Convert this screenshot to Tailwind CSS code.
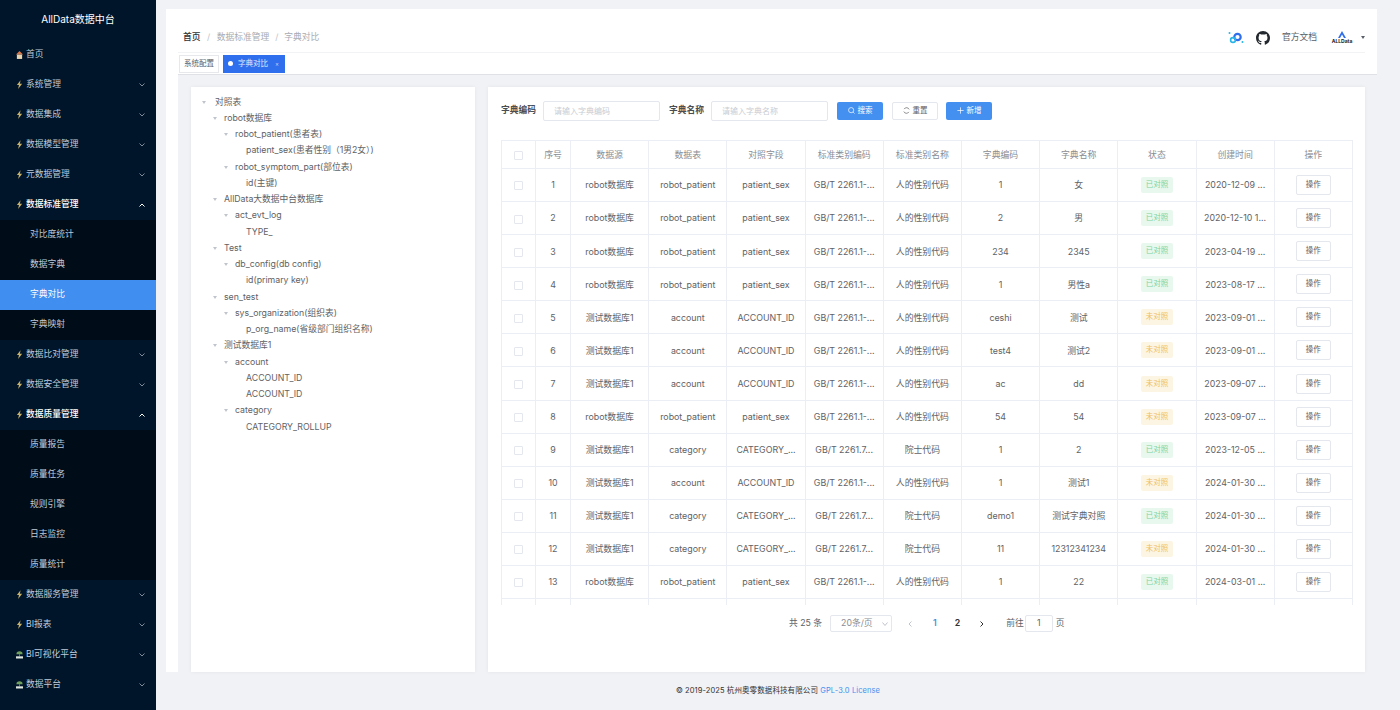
<!DOCTYPE html>
<html lang="zh">
<head>
  <meta charset="UTF-8" />
  <title>AllData数据中台</title>
  <script src="https://cdn.jsdelivr.net/npm/@tailwindcss/browser@4"></script>
</head>
<body class="bg-[#f0f2f5] font-['Inter','Noto_Sans_CJK_SC',sans-serif] overflow-hidden">
  <div class="flex w-[1400px] h-[710px] overflow-hidden">
    <!-- sidebar -->
    <aside id="sidebar" class="w-[156px] shrink-0 h-full bg-[#001529] text-[8.75px] text-[#bfcbd9] overflow-hidden">
      <div class="h-[39px] flex items-center justify-center text-[10px] text-white">AllData数据中台</div>
    </aside>

    <div class="flex-1 flex flex-col min-w-0">
      <div class="flex-1 min-h-0 pt-[9px] pl-[10px] pr-[23px]">
        <div class="h-full bg-white flex flex-col">
          <!-- navbar -->
          <header class="h-[44px] shrink-0 mx-[12px] pt-[14px] flex items-center border-b border-[#f2f3f5] text-[8.75px]">
            <div class="flex items-center pl-[5px] pt-[1px]">
              <span class="text-[#303133] font-medium">首页</span>
              <span class="mx-[6.5px] text-[#c0c4cc]">/</span>
              <span class="text-[#a8abb2]">数据标准管理</span>
              <span class="mx-[6px] text-[#c0c4cc]">/</span>
              <span class="text-[#a8abb2]">字典对比</span>
            </div>
            <div class="ml-auto flex items-center">
              <svg class="w-[16px] h-[14px]" viewBox="0 0 16 14">
                <circle cx="9.5" cy="6" r="3.2" fill="none" stroke="#2f6fed" stroke-width="2.2"/>
                <circle cx="5" cy="9" r="2.4" fill="none" stroke="#27b5e8" stroke-width="1.6"/>
                <circle cx="1.5" cy="2" r="1" fill="#27b5e8"/>
                <circle cx="14.5" cy="11" r="1" fill="#27b5e8"/>
              </svg>
              <svg class="w-[14px] h-[14px] ml-[12px] text-[#24292f]" viewBox="0 0 16 16" fill="currentColor">
                <path d="M8 0C3.58 0 0 3.58 0 8c0 3.54 2.29 6.53 5.47 7.59.4.07.55-.17.55-.38 0-.19-.01-.82-.01-1.49-2.01.37-2.53-.49-2.69-.94-.09-.23-.48-.94-.82-1.13-.28-.15-.68-.52-.01-.53.63-.01 1.08.58 1.23.82.72 1.21 1.87.87 2.33.66.07-.52.28-.87.51-1.07-1.78-.2-3.64-.89-3.64-3.95 0-.87.31-1.59.82-2.15-.08-.2-.36-1.02.08-2.12 0 0 .67-.21 2.2.82.64-.18 1.32-.27 2-.27s1.36.09 2 .27c1.53-1.04 2.2-.82 2.2-.82.44 1.1.16 1.92.08 2.12.51.56.82 1.27.82 2.15 0 3.07-1.87 3.75-3.65 3.95.29.25.54.73.54 1.48 0 1.07-.01 1.93-.01 2.2 0 .21.15.46.55.38A8.01 8.01 0 0 0 16 8c0-4.42-3.58-8-8-8z"/>
              </svg>
              <span class="ml-[12px] text-[#5a5e66]">官方文档</span>
              <div class="ml-[14px] flex flex-col items-center w-[22px]">
                <svg class="w-[8px] h-[7px]" viewBox="0 0 8 7"><path d="M4 0 8 7H6L4 3.5 2 7H0Z" fill="#2f6fed"/></svg>
                <span class="text-[5px] leading-[6px] font-bold text-[#1a1a1a] whitespace-nowrap">ALLData</span>
              </div>
              <span class="ml-[8px] w-0 h-0 border-x-[2.5px] border-x-transparent border-t-[3px] border-t-[#5a5e66]"></span>
            </div>
          </header>

          <!-- tags -->
          <div class="h-[21px] shrink-0 flex items-center pl-[13px] gap-[4px] text-[7.5px]">
            <span class="h-[18px] px-[4px] flex items-center border border-[#e6e8eb] text-[#5a5e66] bg-white">系统配置</span>
            <span class="h-[18px] px-[5px] flex items-center bg-[#2f6fed] text-white/85">
              <span class="w-[5px] h-[5px] rounded-full bg-white mr-[5px]"></span>字典对比<span class="ml-[7px] mr-[1px] text-[6px] text-white/70">×</span>
            </span>
          </div>

          <!-- content -->
          <main class="flex-1 min-h-0 bg-[#f0f2f5] ml-[12px] pl-[13px] pr-[12px] pt-[12px] flex gap-[13px] border-t border-[#dfe1e6]">
            <section id="tree" class="w-[284px] shrink-0 bg-white shadow-[0_0_4px_rgba(0,0,0,0.06)] pt-[7px] text-[8.75px] text-[#606266]"></section>

            <section class="flex-1 min-w-0 bg-white shadow-[0_0_4px_rgba(0,0,0,0.06)] pt-[13px] px-[13px]">
              <form class="flex items-center h-[21px] text-[8.75px]">
                <label class="font-semibold text-[#4a4d52]">字典编码</label>
                <input class="ml-[7px] w-[117px] h-[20px] px-[10px] border border-[#e4e7ed] rounded-[2px] text-[8px] placeholder:text-[#c8ccd3]" placeholder="请输入字典编码" />
                <label class="ml-[9px] font-semibold text-[#4a4d52]">字典名称</label>
                <input class="ml-[7px] w-[117px] h-[20px] px-[10px] border border-[#e4e7ed] rounded-[2px] text-[8px] placeholder:text-[#c8ccd3]" placeholder="请输入字典名称" />
                <button type="button" class="ml-[9px] w-[46px] h-[18px] rounded-[2px] bg-[#4390f0] text-white text-[7.5px] flex items-center justify-center gap-[3px]">
                  <svg class="w-[7px] h-[7px]" viewBox="0 0 10 10" fill="none" stroke="currentColor"><circle cx="4.5" cy="4.5" r="3.7"/><path d="M7.3 7.3 9.3 9.3"/></svg>搜索
                </button>
                <button type="button" class="ml-[9px] w-[46px] h-[18px] rounded-[2px] bg-white border border-[#e4e7ed] text-[#606266] text-[7.5px] flex items-center justify-center gap-[3px]">
                  <svg class="w-[7px] h-[7px]" viewBox="0 0 10 10" fill="none" stroke="currentColor"><path d="M8.8 3.5A4 4 0 0 0 1.6 3M1.2 6.5A4 4 0 0 0 8.4 7"/></svg>重置
                </button>
                <button type="button" class="ml-[8px] w-[46px] h-[18px] rounded-[2px] bg-[#4390f0] text-white text-[7.5px] flex items-center justify-center gap-[3px]">
                  <svg class="w-[7px] h-[7px]" viewBox="0 0 10 10" fill="none" stroke="currentColor"><path d="M5 .5v9M.5 5h9"/></svg>新增
                </button>
              </form>

              <div class="mt-[19px] mr-[-1px] h-[465px] overflow-hidden border-t border-[#ebeef5]">
                <table class="table-fixed w-[851px] border-collapse text-[8.85px] text-[#606266] text-center">
                  <colgroup>
                    <col class="w-[34px]" /><col class="w-[35px]" /><col class="w-[78.2px]" /><col class="w-[78.2px]" /><col class="w-[78.2px]" /><col class="w-[78.2px]" /><col class="w-[78.2px]" /><col class="w-[78.2px]" /><col class="w-[78.2px]" /><col class="w-[78.2px]" /><col class="w-[78.2px]" /><col class="w-[78.2px]" />
                  </colgroup>
                  <thead>
                    <tr id="head" class="h-[27.5px] text-[#8a8d93] font-normal"></tr>
                  </thead>
                  <tbody id="rows"></tbody>
                </table>
              </div>

              <div class="h-[37px] flex items-center text-[8.75px] text-[#606266] pl-[288px]">
                <span>共 25 条</span>
                <div class="ml-[8px] w-[62px] h-[17px] border border-[#e4e7ed] rounded-[2px] flex items-center pl-[10px] text-[#8a8d93]">20条/页
                  <svg class="ml-auto mr-[3px] w-[6px] h-[4px] text-[#c0c4cc]" viewBox="0 0 6 4" fill="none" stroke="currentColor"><path d="M.5.5 3 3.5 5.5.5"/></svg>
                </div>
                <svg class="ml-[16px] w-[4px] h-[6px] text-[#c0c4cc]" viewBox="0 0 4 6" fill="none" stroke="currentColor"><path d="M3.5.5 1 3 3.5 5.5"/></svg>
                <span class="ml-[21px] font-semibold text-[#3f8fd8]">1</span>
                <span class="ml-[18px] font-semibold text-[#303133]">2</span>
                <svg class="ml-[20px] w-[4px] h-[6px] text-[#303133]" viewBox="0 0 4 6" fill="none" stroke="currentColor"><path d="M.5.5 3 3 .5 5.5"/></svg>
                <span class="ml-[22px]">前往</span>
                <span class="ml-[1px] w-[28px] h-[17px] border border-[#e4e7ed] rounded-[2px] flex items-center justify-center">1</span>
                <span class="ml-[3px]">页</span>
              </div>
            </section>
          </main>
        </div>
      </div>
      <footer class="h-[38px] shrink-0 flex items-center justify-center text-[7.5px] text-[#303133] tracking-[0.1px]">
        © 2019-2025 杭州奥零数据科技有限公司&nbsp;<a class="text-[#4390f0]" href="#">GPL-3.0 License</a>
      </footer>
    </div>
  </div>

  <script>
    const bolt = `<svg class="w-[7px] h-[9px] shrink-0" viewBox="0 0 8 10"><path d="M5.2 0 1 5.6h2.4L2.4 10 7 4H4.4Z" fill="#c9b26a"/></svg>`;
    const home = `<svg class="w-[7px] h-[8px] shrink-0" viewBox="0 0 8 9"><path d="M4 0 8 4H0Z" fill="#d9774a"/><path d="M1 4h6v5H1Z" fill="#e8d5b0"/></svg>`;
    const island = `<svg class="w-[7px] h-[8px] shrink-0" viewBox="0 0 8 9"><path d="M.5 3.5a3.5 3.2 0 0 1 7 0Z" fill="#6f9f5c"/><path d="M3.4 3.5h1.2v2.5H3.4Z" fill="#8a6a4a"/><path d="M0 6h8v2.5H0Z" fill="#dfe6e0"/></svg>`;

    const menu = [
      { name: '首页', icon: home, noArrow: true },
      { name: '系统管理' },
      { name: '数据集成' },
      { name: '数据模型管理' },
      { name: '元数据管理' },
      { name: '数据标准管理', children: ['对比度统计', '数据字典', '字典对比', '字典映射'] },
      { name: '数据比对管理' },
      { name: '数据安全管理' },
      { name: '数据质量管理', children: ['质量报告', '质量任务', '规则引擎', '日志监控', '质量统计'] },
      { name: '数据服务管理' },
      { name: 'BI报表' },
      { name: 'BI可视化平台', icon: island },
      { name: '数据平台', icon: island },
    ];

    let sidebarHtml = '';
    menu.forEach(m => {
      const open = !!m.children;
      const arrow = m.noArrow ? '' : `<svg class="ml-auto w-[6px] h-[4px] ${open ? 'text-white' : 'text-[#7f8a99]'}" viewBox="0 0 6 4" fill="none" stroke="currentColor"><path d="${open ? 'M.5 3.5 3 1l2.5 2.5' : 'M.5.5 3 3l2.5-2.5'}"/></svg>`;
      sidebarHtml += `<div class="h-[30px] flex items-center pl-[16px] pr-[11px] gap-[3px] ${open ? 'text-white font-medium' : ''}">${m.icon || bolt}<span>${m.name}</span>${arrow}</div>`;
      if (open) {
        sidebarHtml += `<div class="bg-[#000c17]">`;
        m.children.forEach(c => {
          const active = c === '字典对比';
          sidebarHtml += `<div class="h-[30px] flex items-center pl-[30px] ${active ? 'bg-[#3f8ef0] text-white' : ''}">${c}</div>`;
        });
        sidebarHtml += `</div>`;
      }
    });
    document.getElementById('sidebar').insertAdjacentHTML('beforeend', `<div class="pt-[0.5px]">${sidebarHtml}</div>`);

    const tree = [
      [0, '对照表', 1], [1, 'robot数据库', 1], [2, 'robot_patient(患者表)', 1], [3, 'patient_sex(患者性别（1男2女）)', 0],
      [2, 'robot_symptom_part(部位表)', 1], [3, 'id(主键)', 0], [1, 'AllData大数据中台数据库', 1], [2, 'act_evt_log', 1], [3, 'TYPE_', 0],
      [1, 'Test', 1], [2, 'db_config(db config)', 1], [3, 'id(primary key)', 0], [1, 'sen_test', 1], [2, 'sys_organization(组织表)', 1],
      [3, 'p_org_name(省级部门组织名称)', 0], [1, '测试数据库1', 1], [2, 'account', 1], [3, 'ACCOUNT_ID', 0], [3, 'ACCOUNT_ID', 0],
      [2, 'category', 1], [3, 'CATEGORY_ROLLUP', 0],
    ];
    const treePad = ['pl-[11px]', 'pl-[22px]', 'pl-[33px]', 'pl-[44px]'];
    document.getElementById('tree').innerHTML = tree.map(([lv, t, caret]) => `
      <div class="h-[16.25px] flex items-center ${treePad[lv]}">
        <span class="w-[11px] shrink-0 ${lv === 0 ? 'mr-[2px]' : ''}">${caret ? '<span class="block w-0 h-0 border-x-[2.5px] border-x-transparent border-t-[3px] border-t-[#c0c4cc]"></span>' : ''}</span>
        <span class="whitespace-nowrap">${t}</span>
      </div>`).join('');

    const heads = ['', '序号', '数据源', '数据表', '对照字段', '标准类别编码', '标准类别名称', '字典编码', '字典名称', '状态', '创建时间', '操作'];
    const checkbox = '<span class="inline-block align-middle w-[9px] h-[9px] border border-[#e4e7ed] rounded-[1px] bg-white"></span>';
    document.getElementById('head').innerHTML = heads.map((h, i) =>
      `<th class="border-x border-b border-[#ebeef5] font-normal">${i === 0 ? checkbox : h}</th>`).join('');

    const p = ['robot数据库', 'robot_patient', 'patient_sex', 'GB/T 2261.1-...', '人的性别代码'];
    const a = ['测试数据库1', 'account', 'ACCOUNT_ID', 'GB/T 2261.1-...', '人的性别代码'];
    const c = ['测试数据库1', 'category', 'CATEGORY_...', 'GB/T 2261.7...', '院士代码'];
    const data = [
      [p, '1', '女', 1, '2020-12-09 ...'],
      [p, '2', '男', 1, '2020-12-10 1...'],
      [p, '234', '2345', 1, '2023-04-19 ...'],
      [p, '1', '男性a', 1, '2023-08-17 ...'],
      [a, 'ceshi', '测试', 0, '2023-09-01 ...'],
      [a, 'test4', '测试2', 0, '2023-09-01 ...'],
      [a, 'ac', 'dd', 0, '2023-09-07 ...'],
      [p, '54', '54', 0, '2023-09-07 ...'],
      [c, '1', '2', 1, '2023-12-05 ...'],
      [a, '1', '测试1', 0, '2024-01-30 ...'],
      [c, 'demo1', '测试字典对照', 1, '2024-01-30 ...'],
      [c, '11', '12312341234', 0, '2024-01-30 ...'],
      [p, '1', '22', 1, '2024-03-01 ...'],
      null,
    ];
    const td = 'border-x border-b border-[#ebeef5] whitespace-nowrap overflow-hidden';
    document.getElementById('rows').innerHTML = data.map((r, i) => {
      if (!r) return `<tr class="h-[33.08px]">${heads.map(() => `<td class="${td}"></td>`).join('')}</tr>`;
      const tag = r[3]
        ? '<span class="inline-block h-[16px] leading-[16px] px-[5px] rounded-[2px] bg-[#e9f8ee] text-[#7fd39b] text-[7.5px]">已对照</span>'
        : '<span class="inline-block h-[16px] leading-[16px] px-[5px] rounded-[2px] bg-[#fdf5e3] text-[#eebf63] text-[7.5px]">未对照</span>';
      return `<tr class="h-[33.08px]">
        <td class="${td}">${checkbox}</td>
        <td class="${td}">${i + 1}</td>
        ${r[0].map(v => `<td class="${td}">${v}</td>`).join('')}
        <td class="${td}">${r[1]}</td>
        <td class="${td}">${r[2]}</td>
        <td class="${td}">${tag}</td>
        <td class="${td}">${r[4]}</td>
        <td class="${td}"><span class="inline-block w-[35px] h-[20px] leading-[18px] border border-[#e4e7ed] rounded-[2px] text-[7.5px] text-[#606266]">操作</span></td>
      </tr>`;
    }).join('');
  </script>
</body>
</html>
